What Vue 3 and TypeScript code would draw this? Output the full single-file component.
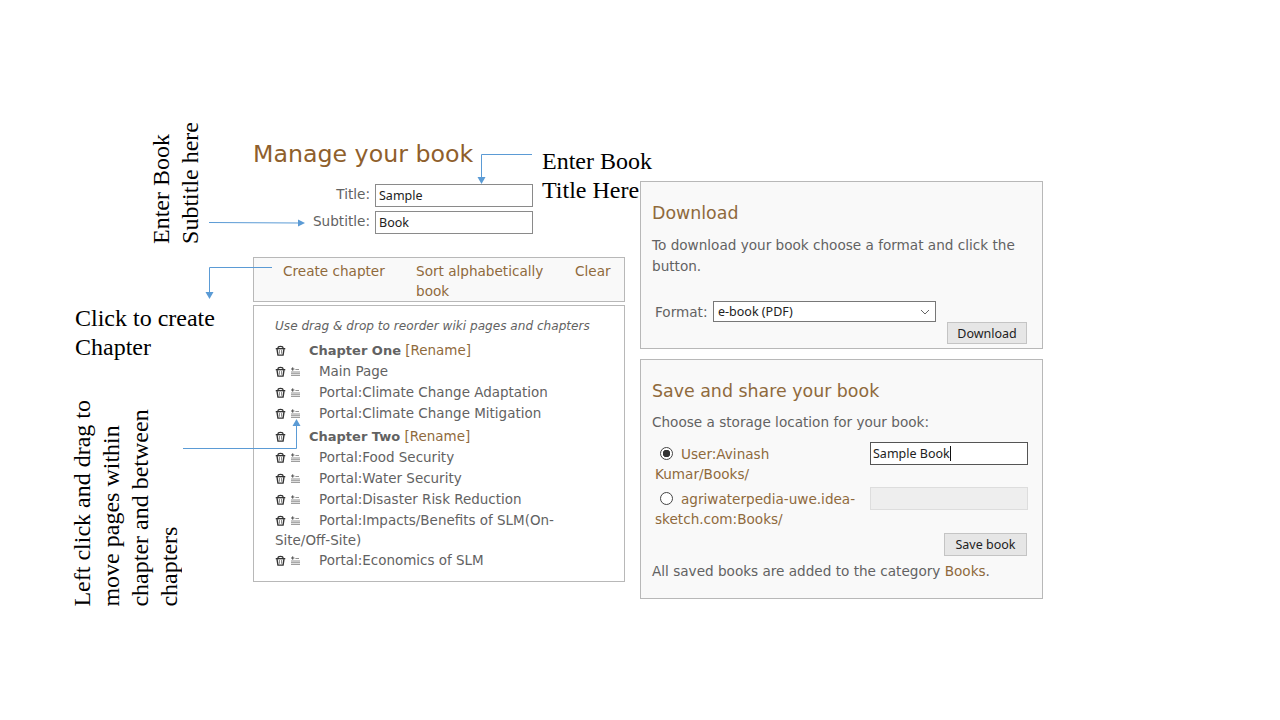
<script setup lang="ts">
interface BookRow {
  title: string
  chapter?: boolean
}

const rows: BookRow[] = [
  { title: 'Chapter One', chapter: true },
  { title: 'Main Page' },
  { title: 'Portal:Climate Change Adaptation' },
  { title: 'Portal:Climate Change Mitigation' },
  { title: 'Chapter Two', chapter: true },
  { title: 'Portal:Food Security' },
  { title: 'Portal:Water Security' },
  { title: 'Portal:Disaster Risk Reduction' },
  { title: 'Portal:Impacts/Benefits of SLM(On-Site/Off-Site)' },
  { title: 'Portal:Economics of SLM' },
]
</script>

<template>
  <div class="page">
    <div class="left">
      <h1>Manage your book</h1>
      <div class="fields">
        <label>Title:</label>
        <input class="text" type="text" value="Sample" readonly />
        <label>Subtitle:</label>
        <input class="text" type="text" value="Book" readonly />
      </div>

      <div class="toolbar">
        <a>Create chapter</a>
        <a>Sort alphabetically book</a>
        <a>Clear</a>
      </div>

      <div class="list">
        <p class="hint">Use drag &amp; drop to reorder wiki pages and chapters</p>
        <div v-for="row in rows" :key="row.title" class="row" :class="{ chapter: row.chapter }">
          <svg class="trash" width="11" height="11" viewBox="0 0 12 12">
            <path d="M3.2 3.4C3.2 .8 8.8 .8 8.8 3.4" fill="none" stroke="#333" stroke-width="1.3" />
            <path d="M.8 4h10.4" fill="none" stroke="#333" stroke-width="1.5" />
            <path d="M2.2 4.6 3.2 11h5.6l1-6.4" fill="none" stroke="#333" stroke-width="1.5" />
            <path d="M4.8 5.5v4M7.2 5.5v4" stroke="#666" stroke-width=".9" />
          </svg>
          <svg v-if="!row.chapter" class="sort" width="9" height="9" viewBox="0 0 9 9">
            <path d="M0 2h3.4M1.7 .3v3.4" stroke="#444" stroke-width=".9" />
            <path d="M4.4 2.5H8M0 5h9M0 6.7h9M0 8.4h9" stroke="#777" stroke-width=".8" />
          </svg>
          <template v-if="row.chapter">
            <b>{{ row.title }}</b> <a>[Rename]</a>
          </template>
          <template v-else>{{ row.title }}</template>
        </div>
      </div>
    </div>

    <div class="right">
      <section class="panel download">
        <h2>Download</h2>
        <p>To download your book choose a format and click the button.</p>
        <div class="format">
          <label>Format:</label>
          <div class="select">
            e-book (PDF)
            <svg width="10" height="6" viewBox="0 0 10 6"><path d="M1 1l4 4 4-4" fill="none" stroke="#666" /></svg>
          </div>
        </div>
        <div class="actions"><button type="button">Download</button></div>
      </section>

      <section class="panel save">
        <h2>Save and share your book</h2>
        <p>Choose a storage location for your book:</p>
        <div class="storage">
          <div class="place"><i class="radio on"></i><a>User:Avinash Kumar/Books/</a></div>
          <div class="caret-wrap">
            <input class="text name" type="text" value="Sample Book" readonly />
            <span class="caret"></span>
          </div>
          <div class="place"><i class="radio"></i><a>agriwaterpedia-uwe.idea-sketch.com:Books/</a></div>
          <input class="text name off" type="text" disabled />
        </div>
        <div class="actions"><button type="button">Save book</button></div>
        <p class="note">All saved books are added to the category <a>Books</a>.</p>
      </section>
    </div>

    <svg class="arrows" width="1280" height="720" viewBox="0 0 1280 720">
      <g fill="none" stroke="#5b9bd5" stroke-width="1">
        <path d="M532 154.5H481.5V178" />
        <path d="M209 222.5 299 223" />
        <path d="M272 267.5H209.5V293" />
        <path d="M183 448.5H296.5V425" />
      </g>
      <g fill="#5b9bd5">
        <path d="M477.5 177h8l-4 7z" />
        <path d="M298 219.5v7l7-3.5z" />
        <path d="M205.5 292h8l-4 7z" />
        <path d="M292.5 426h8l-4-7z" />
      </g>
    </svg>

    <div class="note-text book-title">Enter Book<br />Title Here</div>
    <div class="note-text create">Click to create<br />Chapter</div>
    <div class="note-text turned subtitle">Enter Book<br />Subtitle here</div>
    <div class="note-text turned drag">Left click and drag to<br />move pages within<br />chapter and between<br />chapters</div>
  </div>
</template>

<style scoped>
* {
  box-sizing: border-box;
  margin: 0;
  padding: 0;
}

.page {
  position: relative;
  width: 1280px;
  height: 720px;
  overflow: hidden;
  display: flex;
  align-items: flex-start;
  gap: 15px;
  padding: 139px 0 0 253px;
  background: #fff;
  font-family: "DejaVu Sans", sans-serif;
  font-size: 13.6px;
  line-height: 20px;
  color: #626262;
}

a {
  color: #8f6a3c;
}

.left {
  width: 372px;
}

h1 {
  font-weight: 400;
  font-size: 23.7px;
  line-height: 30px;
  color: #8f5f2c;
}

h2 {
  font-weight: 400;
  font-size: 17.4px;
  line-height: 24px;
  color: #8f6a3c;
}

.fields {
  display: grid;
  grid-template-columns: 117px 158px;
  gap: 4px 5px;
  margin-top: 15px;
}

.fields label {
  text-align: right;
  line-height: 21px;
}

.fields .text {
  padding: 0 3px;
}

.text {
  display: block;
  width: 158px;
  height: 23px;
  border: 1px solid #8a8a8a;
  padding: 0 2px;
  background: #fff;
  font-family: "Noto Sans", sans-serif;
  font-size: 12.5px;
  color: #222;
  outline: none;
}

.toolbar {
  display: grid;
  grid-template-columns: 133px 159px 1fr;
  height: 45px;
  margin-top: 23px;
  padding: 3px 0 0 29px;
  border: 1px solid #b8b8b8;
  background: #f9f9f9;
}

.list {
  height: 277px;
  margin-top: 3px;
  padding: 10px 21px 0;
  border: 1px solid #b8b8b8;
  font-size: 13.47px;
}

.hint {
  font-style: italic;
  font-size: 12.1px;
  margin-bottom: 4px;
}

.row {
  min-height: 21px;
  line-height: 20px;
}

.row b {
  font-size: 13px;
}

/* second chapter sits a little lower than the page rows */
.row:nth-child(6) {
  margin-top: 2px;
}

.trash {
  vertical-align: -1px;
  margin-right: 5px;
}

.sort {
  vertical-align: 0;
  margin-right: 19px;
}

.chapter .trash {
  margin-right: 23px;
}

.right {
  width: 403px;
  margin-top: 42px;
  display: flex;
  flex-direction: column;
  gap: 10px;
}

.panel {
  border: 1px solid #b8b8b8;
  background: #f9f9f9;
  padding: 19px 15px 0 11px;
}

.panel p {
  line-height: 21px;
}

.download {
  height: 168px;
}

.download p {
  margin-top: 10px;
}

.format {
  display: flex;
  align-items: center;
  margin: 24px 0 0 3px;
}

.format label {
  width: 58px;
}

.select {
  display: flex;
  align-items: center;
  justify-content: space-between;
  width: 223px;
  height: 21px;
  padding: 0 5px 0 4px;
  border: 1px solid #777;
  background: #fff;
  font-family: "Noto Sans", sans-serif;
  font-size: 12.5px;
  color: #222;
}

.actions {
  display: flex;
  justify-content: flex-end;
}

button {
  width: 80px;
  height: 22px;
  border: 1px solid #c4c4c4;
  background: #e6e6e6;
  font-family: "Noto Sans", sans-serif;
  font-size: 12.5px;
  color: #222;
}

.save {
  height: 240px;
}

.save p {
  margin-top: 9px;
}

.storage {
  display: grid;
  grid-template-columns: 218px 158px;
  margin-top: 9px;
  row-gap: 3px;
}

.place {
  height: 42px;
  padding: 2px 14px 0 3px;
}

.radio {
  display: inline-block;
  width: 13px;
  height: 13px;
  margin: 0 8px 0 5px;
  border: 1px solid #444;
  border-radius: 50%;
  vertical-align: -1px;
  background: #fff;
}

.radio.on {
  background: radial-gradient(circle, #333 0 3.5px, #fff 4px);
}

.caret-wrap {
  position: relative;
}

.name {
  border-color: #555;
}

.off {
  background: #eee;
  border-color: #ddd;
}

.caret {
  position: absolute;
  left: 80px;
  top: 4px;
  width: 1px;
  height: 15px;
  background: #111;
}

.save .actions {
  margin-top: 4px;
}

.save button {
  width: 83px;
  height: 23px;
}

.save .note {
  margin-top: 5px;
}

.arrows {
  position: absolute;
  left: 0;
  top: 0;
  pointer-events: none;
}

.note-text {
  position: absolute;
  font-family: "Liberation Serif", serif;
  font-size: 24px;
  line-height: 29px;
  color: #000;
  white-space: nowrap;
}

.book-title {
  left: 542px;
  top: 147px;
}

.create {
  left: 75px;
  top: 304px;
}

.turned {
  writing-mode: vertical-rl;
  transform: rotate(180deg);
}

.subtitle {
  left: 147px;
  bottom: 476px;
}

.drag {
  left: 68px;
  bottom: 113px;
}
</style>
